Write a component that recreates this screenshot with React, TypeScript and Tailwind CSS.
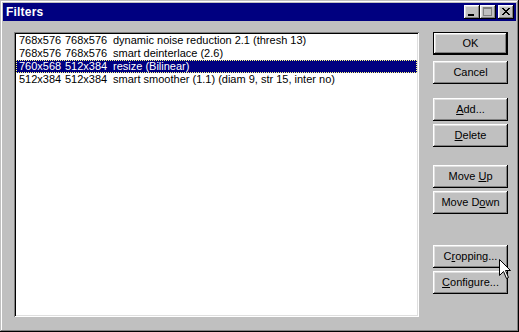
import React from 'react';

interface FilterRow {
  src: string;
  dst: string;
  name: string;
}

const rows: FilterRow[] = [
  { src: '768x576', dst: '768x576', name: 'dynamic noise reduction 2.1 (thresh 13)' },
  { src: '768x576', dst: '768x576', name: 'smart deinterlace (2.6)' },
  { src: '760x568', dst: '512x384', name: 'resize (Bilinear)' },
  { src: '512x384', dst: '512x384', name: 'smart smoother (1.1) (diam 9, str 15, inter no)' },
];

const raised =
  'bg-[#c0c0c0] shadow-[inset_-1px_-1px_#000000,inset_1px_1px_#ffffff,inset_-2px_-2px_#808080,inset_2px_2px_#dfdfdf]';

function Btn({
  children,
  isDefault,
  className,
}: {
  children: React.ReactNode;
  isDefault?: boolean;
  className?: string;
}) {
  if (isDefault) {
    return (
      <div className={`h-[23px] w-[75px] border border-black ${className ?? ''}`}>
        <div className={`h-full w-full flex items-center justify-center ${raised}`}>{children}</div>
      </div>
    );
  }
  return (
    <div className={`h-[23px] w-[75px] flex items-center justify-center ${raised} ${className ?? ''}`}>
      {children}
    </div>
  );
}

function TitleButton({ children, className }: { children: React.ReactNode; className?: string }) {
  return (
    <div className={`relative h-[14px] w-[16px] ${raised} ${className ?? ''}`}>{children}</div>
  );
}

export default function App() {
  return (
    <div
      className="relative w-[519px] h-[332px] bg-[#c0c0c0] p-[3px] text-[11px] leading-[13px] text-black shadow-[inset_-1px_-1px_#000000,inset_1px_1px_#c0c0c0,inset_-2px_-2px_#808080,inset_2px_2px_#ffffff]"
      style={{ fontFamily: '"Liberation Sans", Arial, sans-serif' }}
    >
      {/* Title bar */}
      <div className="h-[18px] bg-[#000080] flex items-center pl-[3px] pr-[2px]">
        <span className="font-bold text-white text-[12px] tracking-[0.2px]">Filters</span>
        <div className="ml-auto flex items-center">
          <TitleButton>
            <div className="absolute left-[4px] top-[9px] w-[6px] h-[2px] bg-black" />
          </TitleButton>
          <TitleButton>
            <div className="absolute left-[3px] top-[2px] w-[9px] h-[9px] border border-t-2 border-[#808080]" />
          </TitleButton>
          <TitleButton className="ml-[2px]">
            <svg className="absolute left-[4px] top-[3px]" width="8" height="7" viewBox="0 0 8 7">
              <path d="M0 0h2v1h1v1h2V1h1V0h2v1H7v1H6v1H5v1h1v1h1v1h1v1H6V6H5V5H3v1H2v1H0V6h1V5h1V4h1V3H2V2H1V1H0z" fill="#000" />
            </svg>
          </TitleButton>
        </div>
      </div>

      {/* Body */}
      <div className="flex pt-[11px] pl-[11px]">
        {/* Listbox */}
        <div className="w-[405px] h-[285px] bg-white pt-[2px] shadow-[inset_1px_1px_#808080,inset_-1px_-1px_#ffffff,inset_2px_2px_#000000,inset_-2px_-2px_#dfdfdf] px-[2px]">
          {rows.map((r, i) => {
            const selected = i === 2;
            return (
              <div
                key={i}
                className={`flex h-[13px] pl-[3px] whitespace-nowrap ${
                  selected ? 'bg-[#000080] text-white outline-1 outline-dotted outline-[#ffff80] -outline-offset-1' : ''
                }`}
              >
                <span className="w-[46px]">{r.src}</span>
                <span className="w-[48px]">{r.dst}</span>
                <span>{r.name}</span>
              </div>
            );
          })}
        </div>

        {/* Buttons */}
        <div className="ml-[14px] flex flex-col">
          <Btn isDefault>OK</Btn>
          <Btn className="mt-[6px]">Cancel</Btn>
          <Btn className="mt-[14px]">
            <span><u>A</u>dd...</span>
          </Btn>
          <Btn className="mt-[3px]">
            <span><u>D</u>elete</span>
          </Btn>
          <Btn className="mt-[18px]">
            <span>Move <u>U</u>p</span>
          </Btn>
          <Btn className="mt-[3px]">
            <span>Move D<u>o</u>wn</span>
          </Btn>
          <Btn className="mt-[31px]">
            <span>C<u>r</u>opping...</span>
          </Btn>
          <Btn className="mt-[3px]">
            <span><u>C</u>onfigure...</span>
          </Btn>
        </div>
      </div>

      {/* Mouse cursor */}
      <svg className="absolute left-[499px] top-[259px]" width="13" height="21" viewBox="0 0 13 21">
        <path d="M0.5 0.5 L0.5 16.5 L4.5 12.5 L7.5 19.5 L9.5 18.5 L6.5 11.5 L11.5 11.5 Z" fill="#fff" stroke="#000" strokeWidth="1" />
      </svg>
    </div>
  );
}
